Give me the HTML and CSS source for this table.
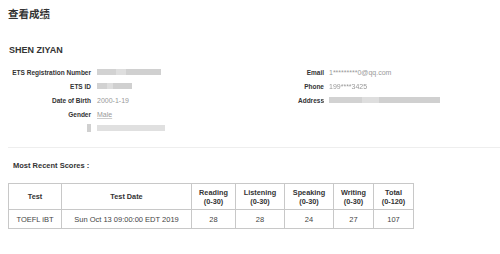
FILE: index.html
```html
<!DOCTYPE html>
<html>
<head>
<meta charset="utf-8">
<link rel="stylesheet" href="styles.css">
</head>
<body>
<div class="page">
  <h1 class="title">查看成绩</h1>
  <h2 class="name">SHEN ZIYAN</h2>
  <div class="info">
    <div class="info-col left">
      <div class="lbl">ETS Registration Number</div><div class="val"><span class="blur b1"></span></div>
      <div class="lbl">ETS ID</div><div class="val"><span class="blur b2"></span></div>
      <div class="lbl">Date of Birth</div><div class="val">2000-1-19</div>
      <div class="lbl">Gender</div><div class="val"><span class="male">Male</span></div>
      <div class="lbl"><span class="blur b5a"></span></div><div class="val"><span class="blur b5"></span></div>
    </div>
    <div class="info-col right">
      <div class="lbl">Email</div><div class="val">1*********0@qq.com</div>
      <div class="lbl">Phone</div><div class="val"><span class="soft">199****3425</span></div>
      <div class="lbl">Addres<span class="soft">s</span></div><div class="val"><span class="blur b6"></span></div>
    </div>
  </div>
  <hr class="sep">
  <div class="recent">Most Recent Scores :</div>
  <table class="scores">
    <colgroup>
      <col style="width:53px"><col style="width:130px"><col style="width:44px"><col style="width:49px"><col style="width:49px"><col style="width:40px"><col style="width:40px">
    </colgroup>
    <thead>
      <tr>
        <th>Test</th>
        <th>Test Date</th>
        <th>Reading<br>(0-30)</th>
        <th>Listening<br>(0-30)</th>
        <th>Speaking<br>(0-30)</th>
        <th>Writing<br>(0-30)</th>
        <th>Total<br>(0-120)</th>
      </tr>
    </thead>
    <tbody>
      <tr>
        <td>TOEFL iBT</td>
        <td>Sun Oct 13 09:00:00 EDT 2019</td>
        <td>28</td>
        <td>28</td>
        <td>24</td>
        <td>27</td>
        <td>107</td>
      </tr>
    </tbody>
  </table>
</div>
</body>
</html>
```

FILE: styles.css
```css
html, body {
  margin: 0;
  padding: 0;
  background: #fff;
}
body {
  font-family: "Liberation Sans", Arial, sans-serif;
  color: #333;
}
.page {
  padding: 7px 0 0 8px;
}
.title {
  margin: 0;
  font-family: "Noto Sans CJK SC", "Liberation Sans", sans-serif;
  font-size: 10.5px;
  line-height: 13px;
  font-weight: 700;
  color: #333;
}
.name {
  margin: 25px 0 0 1px;
  font-size: 9px;
  line-height: 11px;
  font-weight: 700;
  color: #333;
}
.info {
  display: flex;
  margin-top: 9px;
}
.info-col {
  display: grid;
  grid-auto-rows: 14px;
  align-items: center;
}
.info-col.left {
  grid-template-columns: 83px 120px;
  column-gap: 6px;
  width: 267px;
}
.info-col.right {
  grid-template-columns: 49px 120px;
  column-gap: 5px;
}
.lbl {
  text-align: right;
  font-size: 6.5px;
  font-weight: 700;
  color: #333;
  white-space: nowrap;
}
.val {
  font-size: 7px;
  color: #999;
  white-space: nowrap;
  display: flex;
  align-items: center;
}
.male {
  text-decoration: underline;
  text-decoration-color: #ccc;
}
.soft {
  filter: blur(0.5px);
}
.blur {
  display: inline-block;
  height: 6px;
  background: linear-gradient(90deg, #d2d2d2 0 30%, #dedede 30% 45%, #d0d0d0 45% 100%);
  filter: blur(0.7px);
}
.b1 { width: 64px; }
.b2 { width: 35px; }
.b5 { width: 68px; background: #e0e0e0; }
.b5a { width: 4px; height: 8px; background: #d0d0d0; vertical-align: middle; }
.b6 { width: 111px; }
.sep {
  margin: 12px 0 0 0;
  border: 0;
  border-top: 1px solid #eee;
}
.recent {
  margin: 13px 0 0 5px;
  font-size: 7.5px;
  line-height: 9px;
  font-weight: 700;
  color: #333;
}
.scores {
  margin-top: 13px;
  border-collapse: collapse;
  border: 1px solid #999;
  table-layout: fixed;
  width: 405px;
}
.scores th, .scores td {
  border: 1px solid #c8c8c8;
  text-align: center;
  padding: 0;
  color: #333;
}
.scores th {
  height: 25px;
  font-size: 7.3px;
  line-height: 9px;
  font-weight: 700;
}
.scores td {
  height: 18px;
  font-size: 7.5px;
  line-height: 9px;
  color: #444;
}
```
